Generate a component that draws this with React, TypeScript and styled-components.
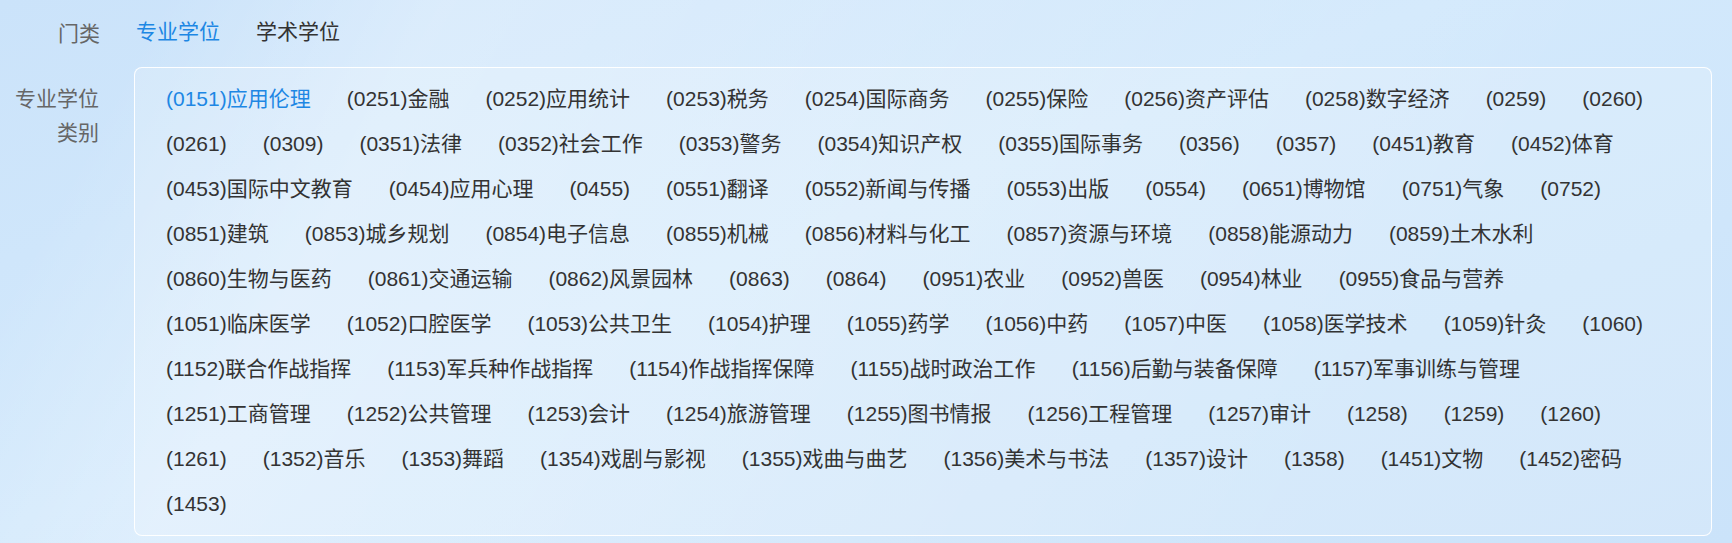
import React, { useState } from "react";
import styled, { createGlobalStyle } from "styled-components";

const GlobalStyle = createGlobalStyle`
  html, body {
    margin: 0;
    padding: 0;
  }
  body {
    font-family: "Liberation Sans", "Noto Sans CJK SC", sans-serif;
    background: #cde5fb;
  }
`;

const Page = styled.div`
  width: 1732px;
  height: 543px;
  box-sizing: border-box;
  overflow: hidden;
  background:
    linear-gradient(118deg, rgba(255, 255, 255, 0) 0%, rgba(255, 255, 255, 0) 8%, rgba(255, 255, 255, 0.28) 22%, rgba(255, 255, 255, 0.12) 55%, rgba(255, 255, 255, 0) 80%),
    linear-gradient(160deg, #cbe3fa 0%, #d3e9fc 45%, #cbe3fa 100%);
  font-size: 21px;
`;

const TabRow = styled.div`
  display: flex;
  align-items: center;
  height: 67px;
  gap: 36px;
`;

const Label = styled.div`
  width: 100px;
  flex-shrink: 0;
  text-align: right;
  color: #666;
  line-height: 34px;
`;

const Tab = styled.div<{ $active?: boolean }>`
  color: ${(p) => (p.$active ? "#1d87e4" : "#333")};
  cursor: pointer;
  line-height: 34px;
  margin-top: -4px;
`;

const Body = styled.div`
  display: flex;
  align-items: flex-start;
  gap: 35px;
`;

const SideLabel = styled(Label)`
  padding-top: 15px;
  width: 99px;
`;

const Panel = styled.div`
  flex: 1;
  margin-right: 20px;
  box-sizing: border-box;
  height: 469px;
  padding: 8px 14px 6px 13px;
  border: 1px solid rgba(255, 255, 255, 0.95);
  border-radius: 8px;
  background: rgba(255, 255, 255, 0.16);
  display: flex;
  flex-wrap: wrap;
  align-content: flex-start;
`;

const Item = styled.div<{ $active?: boolean }>`
  padding: 0 18px;
  line-height: 45px;
  white-space: nowrap;
  color: ${(p) => (p.$active ? "#1d87e4" : "#333")};
  cursor: pointer;
`;

const items = [
  "(0151)应用伦理", "(0251)金融", "(0252)应用统计", "(0253)税务", "(0254)国际商务", "(0255)保险",
  "(0256)资产评估", "(0258)数字经济", "(0259)", "(0260)", "(0261)", "(0309)", "(0351)法律",
  "(0352)社会工作", "(0353)警务", "(0354)知识产权", "(0355)国际事务", "(0356)", "(0357)",
  "(0451)教育", "(0452)体育", "(0453)国际中文教育", "(0454)应用心理", "(0455)", "(0551)翻译",
  "(0552)新闻与传播", "(0553)出版", "(0554)", "(0651)博物馆", "(0751)气象", "(0752)",
  "(0851)建筑", "(0853)城乡规划", "(0854)电子信息", "(0855)机械", "(0856)材料与化工",
  "(0857)资源与环境", "(0858)能源动力", "(0859)土木水利", "(0860)生物与医药", "(0861)交通运输",
  "(0862)风景园林", "(0863)", "(0864)", "(0951)农业", "(0952)兽医", "(0954)林业", "(0955)食品与营养",
  "(1051)临床医学", "(1052)口腔医学", "(1053)公共卫生", "(1054)护理", "(1055)药学", "(1056)中药",
  "(1057)中医", "(1058)医学技术", "(1059)针灸", "(1060)", "(1152)联合作战指挥", "(1153)军兵种作战指挥",
  "(1154)作战指挥保障", "(1155)战时政治工作", "(1156)后勤与装备保障", "(1157)军事训练与管理",
  "(1251)工商管理", "(1252)公共管理", "(1253)会计", "(1254)旅游管理", "(1255)图书情报",
  "(1256)工程管理", "(1257)审计", "(1258)", "(1259)", "(1260)", "(1261)", "(1352)音乐", "(1353)舞蹈",
  "(1354)戏剧与影视", "(1355)戏曲与曲艺", "(1356)美术与书法", "(1357)设计", "(1358)", "(1451)文物",
  "(1452)密码", "(1453)",
];

const App = () => {
  const [tab, setTab] = useState(0);
  const [active, setActive] = useState(0);

  return (
    <Page>
      <GlobalStyle />
      <TabRow>
        <Label>门类</Label>
        {["专业学位", "学术学位"].map((t, i) => (
          <Tab key={t} $active={tab === i} onClick={() => setTab(i)}>
            {t}
          </Tab>
        ))}
      </TabRow>
      <Body>
        <SideLabel>
          专业学位
          <br />
          类别
        </SideLabel>
        <Panel>
          {items.map((it, i) => (
            <Item key={it} $active={active === i} onClick={() => setActive(i)}>
              {it}
            </Item>
          ))}
        </Panel>
      </Body>
    </Page>
  );
};

export default App;
